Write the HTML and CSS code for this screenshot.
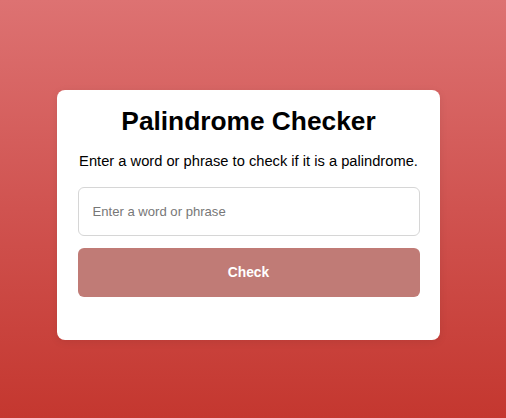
FILE: index.html
```html
<!DOCTYPE html>
<html lang="en">
<head>
<meta charset="utf-8">
<title>Palindrome Checker</title>
<link rel="stylesheet" href="styles.css">
</head>
<body>
  <main class="card">
    <h1 class="title">Palindrome Checker</h1>
    <p class="lead">Enter a word or phrase to check if it is a palindrome.</p>
    <input class="field" type="text" placeholder="Enter a word or phrase">
    <button class="btn" type="button">Check</button>
    <div class="result"></div>
  </main>
</body>
</html>
```
FILE: styles.css
```css
html, body {
  margin: 0;
  height: 100%;
}
body {
  font-family: "Liberation Sans", Arial, sans-serif;
  background: linear-gradient(180deg, #dd7272 0%, #d05350 50%, #c4372f 100%);
  display: flex;
  justify-content: center;
  align-items: flex-start;
  padding: 90px 10px 0 0;
  box-sizing: border-box;
}
.card {
  width: 383px;
  box-sizing: border-box;
  background: #fff;
  border-radius: 8px;
  padding: 18px 20px 20px 21px;
  display: flex;
  flex-direction: column;
  box-shadow: 0 2px 8px rgba(0,0,0,0.08);
}
.title {
  margin: 0 0 18px;
  font-size: 26.3px;
  line-height: 26px;
  font-weight: bold;
  text-align: center;
  color: #000;
}
.lead {
  margin: 0 0 17px;
  font-size: 14.7px;
  line-height: 18px;
  color: #000;
  text-align: center;
  white-space: nowrap;
}
.field {
  height: 49px;
  box-sizing: border-box;
  border: 1px solid #d6d6d6;
  border-radius: 6px;
  padding: 0 14px;
  font-family: inherit;
  font-size: 13.1px;
  color: #333;
  outline: none;
}
.field::placeholder {
  color: #777;
}
.btn {
  margin-top: 12px;
  height: 49px;
  border: none;
  border-radius: 6px;
  background: #c07b76;
  color: #fff;
  font-family: inherit;
  font-size: 13.8px;
  font-weight: bold;
}
.result {
  min-height: 23px;
}
```
